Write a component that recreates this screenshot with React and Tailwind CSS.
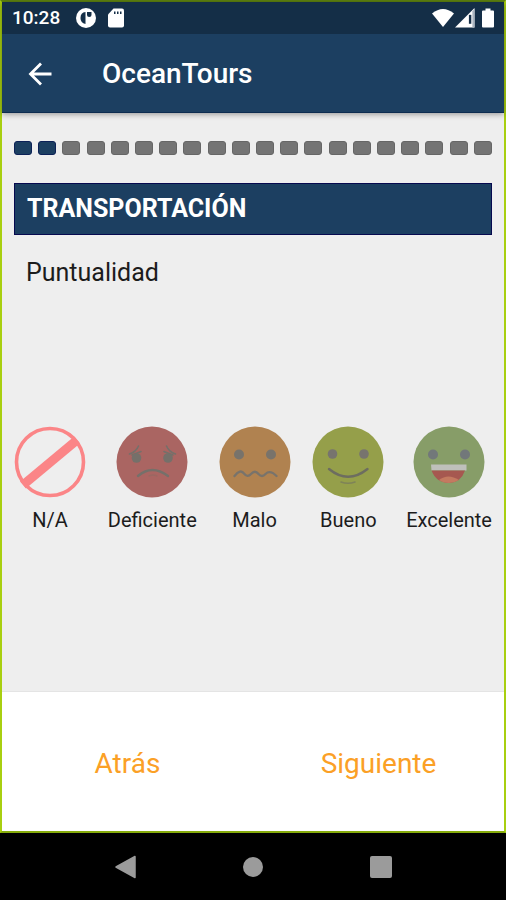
import React from "react";

const TOTAL_STEPS = 20;
const CURRENT_STEP = 2;

function NotApplicableFace() {
  return (
    <svg viewBox="0 0 72 72" className="size-18" aria-hidden="true">
      <path d="M9 59 L63 14" stroke="#fb8587" strokeWidth="9" />
      <circle cx="36" cy="36" r="33.5" fill="none" stroke="#fb8587" strokeWidth="3.6" />
    </svg>
  );
}

function PoorFace() {
  return (
    <svg viewBox="0 0 72 72" className="size-18" aria-hidden="true">
      <circle cx="36" cy="36" r="35.5" fill="#aa6562" />
      <g fill="none" stroke="#75706a" strokeWidth="1.6" strokeLinecap="round">
        <path d="M13.5 28 Q20 26 22.5 20" />
        <path d="M16 29 L25 25.5" />
        <path d="M50.500 20 Q53 26 59.500 28" />
        <path d="M48 25.500 L57 29" />
        <path d="M22 50 Q36 38 52 50" strokeWidth="2.4" />
        <path d="M33 50 Q37 48 41 50" stroke="#9b6862" strokeWidth="1.4" />
      </g>
      <circle cx="20.5" cy="32" r="4.8" fill="#75706a" />
      <circle cx="52" cy="32" r="4.8" fill="#75706a" />
    </svg>
  );
}

function BadFace() {
  return (
    <svg viewBox="0 0 72 72" className="size-18" aria-hidden="true">
      <circle cx="36" cy="36" r="35.5" fill="#b08250" />
      <circle cx="20" cy="28.5" r="5" fill="#78736b" />
      <circle cx="52" cy="28.5" r="5" fill="#78736b" />
      <path
        d="M15.500 50 Q21.500 42.500 25 47.500 Q28.500 52 32 48 Q36 43.500 39.500 48 Q43 52 46.500 48 Q51 43.500 57.500 50"
        fill="none"
        stroke="#78736b"
        strokeWidth="2.3"
        strokeLinecap="round"
      />
    </svg>
  );
}

function GoodFace() {
  return (
    <svg viewBox="0 0 72 72" className="size-18" aria-hidden="true">
      <circle cx="36" cy="36" r="35.500" fill="#959f4a" />
      <circle cx="20.500" cy="28" r="4.800" fill="#77746e" />
      <circle cx="52" cy="28" r="4.800" fill="#77746e" />
      <path d="M17 43 Q36 58.500 55.500 43" fill="none" stroke="#6d6d60" strokeWidth="2.400" strokeLinecap="round" />
      <path d="M29 56 Q36 58.500 43 56" fill="none" stroke="#7f8358" strokeWidth="1.600" strokeLinecap="round" />
    </svg>
  );
}

function ExcellentFace() {
  return (
    <svg viewBox="0 0 72 72" className="size-18" aria-hidden="true">
      <circle cx="36" cy="36" r="35.500" fill="#879d68" />
      <circle cx="20" cy="28.500" r="5" fill="#72787a" />
      <circle cx="52" cy="28.500" r="5" fill="#72787a" />
      <path d="M18 38.500 H53.500 V44.500 H18.500 Z" fill="#bfc0bb" />
      <path d="M18.500 44.500 H52 Q48 56.500 36 57 Q23 56.500 18.500 44.500 Z" fill="#a65850" />
      <path d="M26 54 Q35 47 46 54 Q41 57 36 57 Q30 57 26 54 Z" fill="#c47a60" />
    </svg>
  );
}

const OPTIONS = [
  { value: "na", label: "N/A", Face: NotApplicableFace },
  { value: "deficiente", label: "Deficiente", Face: PoorFace },
  { value: "malo", label: "Malo", Face: BadFace },
  { value: "bueno", label: "Bueno", Face: GoodFace },
  { value: "excelente", label: "Excelente", Face: ExcellentFace },
];

function StatusBar() {
  return (
    <div className="flex h-8 items-center bg-[#142e47] px-2.5 text-white">
      <span className="text-[19px] leading-6 font-medium">10:28</span>
      <svg viewBox="0 0 20 20" className="ml-4 size-5" aria-hidden="true">
        <circle cx="10" cy="10" r="10" fill="#fff" />
        <path d="M9.500 4 V16 Q4.500 15 4.500 10 Q4.500 4.500 9.500 4 Z" fill="#142e47" />
        <path d="M11 4 H15.500 V7 Q15.500 9 13.200 9 Q11 9 11 7 Z" fill="#142e47" />
      </svg>
      <svg viewBox="0 0 16 19" className="ml-3 h-5 w-4" aria-hidden="true">
        <path d="M5.500 0 H14 Q16 0 16 2 V17 Q16 19 14 19 H2 Q0 19 0 17 V6 Z" fill="#fff" />
        <path d="M6 3 H7.500 V5.500 H6 Z M9 3 H10.500 V5.500 H9 Z M12 3 H13.500 V5.500 H12 Z" fill="#142e47" />
      </svg>
      <div className="ml-auto flex items-center gap-px">
        <svg viewBox="0 0 22 19" className="h-5 w-5.5" aria-hidden="true">
          <path d="M11 18.500 L0 5 Q11 -4 22 5 Z" fill="#fff" />
        </svg>
        <svg viewBox="0 0 19 19" className="h-5 w-5" aria-hidden="true">
          <path d="M0 18.500 L18.500 0 V18.500 Z" fill="#fff" />
          <path d="M13.200 6.500 H15.500 V15 H13.200 Z" fill="#142e47" />
          <path d="M16.500 3 L18.500 1 V18.500 H16.500 Z" fill="#a9b3bf" />
        </svg>
        <svg viewBox="0 0 12 19" className="ml-1.5 h-5 w-3" aria-hidden="true">
          <path d="M3.500 0 H8.500 V2 H11 Q12 2 12 3 V18 Q12 19 11 19 H1 Q0 19 0 18 V3 Q0 2 1 2 H3.500 Z" fill="#fff" />
        </svg>
      </div>
    </div>
  );
}

export default function App() {
  return (
    <div className="flex min-h-screen flex-col bg-black font-[Roboto,sans-serif]">
      <div className="flex flex-1 flex-col border-2 border-[#a8cf10] border-t-[#5f8410] border-b-[#86ac0c] bg-[#eeeeee]">
        <header className="border-b border-[#0d2c50] bg-[#1c3f61] text-white shadow-[0_1px_6px_rgba(0,0,0,0.4)]">
          <StatusBar />
          <div className="flex h-[78px] items-center pt-0.5 pl-6">
            <button type="button" aria-label="Volver" className="flex size-7 items-center justify-center">
              <svg viewBox="0 0 24 24" className="size-6" fill="none" stroke="#fff" strokeWidth="2.800" aria-hidden="true">
                <path d="M23.500 12 H2.500 M13 1.500 L2.500 12 L13 22.500" />
              </svg>
            </button>
            <h1 className="ml-12 text-[28px] leading-8 font-medium">OceanTours</h1>
          </div>
        </header>

        <main className="flex flex-1 flex-col px-3 pt-7">
          <div
            role="progressbar"
            aria-label="Progreso"
            aria-valuemin={0}
            aria-valuemax={TOTAL_STEPS}
            aria-valuenow={CURRENT_STEP}
            className="flex justify-between"
          >
            {Array.from({ length: TOTAL_STEPS }, (_, i) => (
              <span
                key={i}
                className={
                  i < CURRENT_STEP
                    ? "h-3.5 w-4.5 rounded-[3px] border border-[#0c2157] bg-[#1c3f61]"
                    : "h-3.5 w-4.5 rounded-[3px] border border-[#666666] bg-[#747474]"
                }
              />
            ))}
          </div>

          <h2 className="mt-7 border border-[#06094f] bg-[#1c3f61] px-3 py-2.5 text-[25px] leading-[30px] font-bold text-white">
            TRANSPORTACIÓN
          </h2>
          <p id="question" className="mt-5.5 px-3 text-[25px] leading-8 text-[#1c1c1c]">
            Puntualidad
          </p>

          <div role="radiogroup" aria-labelledby="question" className="flex flex-1 items-center justify-between pb-5">
            {OPTIONS.map(({ value, label, Face }) => (
              <label key={value} className="flex cursor-pointer flex-col items-center gap-2 text-xl leading-7 text-[#1c1c1c]">
                <input type="radio" name="rating" value={value} className="sr-only" />
                <Face />
                {label}
              </label>
            ))}
          </div>
        </main>

        <footer className="grid h-35 grid-cols-2 border-t border-[#e4e4e4] bg-white pt-1 text-[28px] leading-8 text-[#fba026]">
          <button type="button">Atrás</button>
          <button type="button">Siguiente</button>
        </footer>
      </div>

      <nav aria-label="Sistema" className="flex h-[67px] items-center justify-center gap-26 bg-black">
        <button type="button" aria-label="Atrás" className="flex size-6 items-center justify-center">
          <svg viewBox="0 0 24 24" className="size-6" aria-hidden="true">
            <path d="M22 1.500 V22.500 L3 12 Z" fill="#9b9b9b" stroke="#9b9b9b" strokeWidth="1.500" strokeLinejoin="round" />
          </svg>
        </button>
        <button type="button" aria-label="Inicio" className="flex size-6 items-center justify-center">
          <span className="size-5 rounded-full bg-[#9b9b9b]" />
        </button>
        <button type="button" aria-label="Recientes" className="flex size-6 items-center justify-center">
          <span className="size-5.5 rounded-xs bg-[#9b9b9b]" />
        </button>
      </nav>
    </div>
  );
}
